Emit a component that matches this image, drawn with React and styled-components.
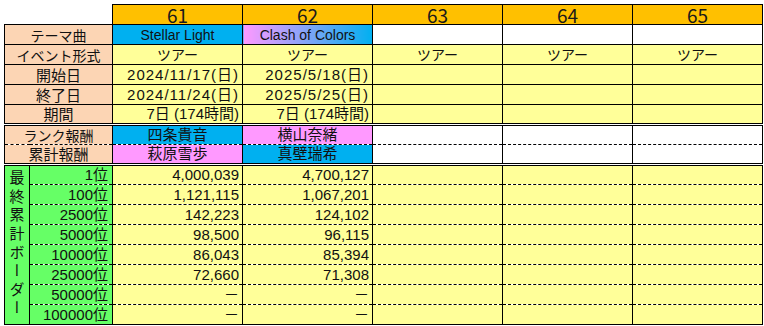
import React from 'react';
import styled, { createGlobalStyle } from 'styled-components';

const Global = createGlobalStyle`
  html, body { margin: 0; padding: 0; background: #fff; }
  body { font-family: "Noto Sans CJK JP", "Liberation Sans", sans-serif; }
`;

const Page = styled.div`
  padding: 4px 0 0 4px;
`;

const Sheet = styled.table`
  border-collapse: collapse;
  table-layout: fixed;
  width: 759px;
  font-family: "Liberation Sans", "Noto Sans CJK JP", sans-serif;
  font-size: 14px;
  color: #111;
`;

const Row = styled.tr`
  height: 20px;
`;

const BLACK = '#000';
const borderFor = (kind) => {
  if (kind === 'double') return `3px double ${BLACK}`;
  if (kind === 'dashed') return `1px dashed ${BLACK}`;
  if (kind === 'none') return 'none';
  return `1px solid ${BLACK}`;
};

const Cell = styled.td`
  padding: 0 ${(p) => (p.$align === 'right' ? '3px' : '2px')};
  border-left: 1px solid ${BLACK};
  border-right: 1px solid ${BLACK};
  border-top: ${(p) => borderFor(p.$top)};
  border-bottom: ${(p) => borderFor(p.$bottom)};
  background: ${(p) => p.$bg || '#FFFF99'};
  text-align: ${(p) => p.$align || 'center'};
  font-size: ${(p) => p.$size || 14}px;
  vertical-align: middle;
  white-space: nowrap;
  overflow: hidden;
  line-height: 16px;
`;

const Blank = styled.th`
  border: none;
  background: #fff;
`;

const Head = styled.th`
  border: 1px solid ${BLACK};
  background: #FFC000;
  font-family: "Noto Sans CJK JP", sans-serif;
  font-weight: 400;
  font-size: 19px;
  line-height: 18px;
  padding: 0;
  color: #1a1a1a;
`;

const Label = styled(Cell)`
  background: #FCD5B4;
  text-align: center;
  font-family: "Noto Sans CJK JP", sans-serif;
`;

const Rank = styled(Cell)`
  background: #66FF66;
  text-align: right;
  padding-right: 4px;
  font-size: 15px;
`;

const Side = styled.td`
  border: 1px solid ${BLACK};
  border-top: 3px double ${BLACK};
  background: #66FF66;
  vertical-align: top;
  text-align: center;
  padding: 4px 0 0;
`;

const VText = styled.span`
  display: inline-block;
  writing-mode: vertical-rl;
  text-orientation: upright;
  font-family: "Noto Sans CJK JP", sans-serif;
  font-size: 15px;
  letter-spacing: 3.6px;
  line-height: 1;
  color: #111;
`;

const Num = styled.span`
  font-size: 15px;
  letter-spacing: ${(p) => (p.$wide ? '1px' : '0')};
`;

const BLUE = '#00B0F0';
const PINK = '#FF99FF';
const WHITE = '#FFFFFF';

const ranks = ['1位', '100位', '2500位', '5000位', '10000位', '25000位', '50000位', '100000位'];
const b61 = ['4,000,039', '1,121,115', '142,223', '98,500', '86,043', '72,660', '－', '－'];
const b62 = ['4,700,127', '1,067,201', '124,102', '96,115', '85,394', '71,308', '－', '－'];

export default function App() {
  return (
    <Page>
      <Global />
      <Sheet>
        <colgroup>
          <col style={{ width: 25 }} />
          <col style={{ width: 83 }} />
          <col style={{ width: 130 }} />
          <col style={{ width: 130 }} />
          <col style={{ width: 130 }} />
          <col style={{ width: 130 }} />
          <col style={{ width: 130 }} />
        </colgroup>
        <tbody>
          <Row>
            <Blank colSpan={2} />
            {['61', '62', '63', '64', '65'].map((n) => (
              <Head key={n}>{n}</Head>
            ))}
          </Row>
          <Row>
            <Label colSpan={2}>テーマ曲</Label>
            <Cell $bg={BLUE}>Stellar Light</Cell>
            <Cell $bg={`linear-gradient(90deg, ${PINK} 0%, ${BLUE} 100%)`}>Clash of Colors</Cell>
            <Cell $bg={WHITE} />
            <Cell $bg={WHITE} />
            <Cell $bg={WHITE} />
          </Row>
          <Row>
            <Label colSpan={2}>イベント形式</Label>
            {[0, 1, 2, 3, 4].map((i) => (
              <Cell key={i}>ツアー</Cell>
            ))}
          </Row>
          <Row>
            <Label colSpan={2} $size={15}>開始日</Label>
            <Cell $align="right"><Num $wide>2024/11/17(日)</Num></Cell>
            <Cell $align="right"><Num $wide>2025/5/18(日)</Num></Cell>
            <Cell />
            <Cell />
            <Cell />
          </Row>
          <Row>
            <Label colSpan={2} $size={15}>終了日</Label>
            <Cell $align="right"><Num $wide>2024/11/24(日)</Num></Cell>
            <Cell $align="right"><Num $wide>2025/5/25(日)</Num></Cell>
            <Cell />
            <Cell />
            <Cell />
          </Row>
          <Row>
            <Label colSpan={2} $size={15}>期間</Label>
            <Cell $align="right"><Num>7日 (174時間)</Num></Cell>
            <Cell $align="right"><Num>7日 (174時間)</Num></Cell>
            <Cell />
            <Cell />
            <Cell />
          </Row>
          <Row>
            <Label colSpan={2} $top="double" $bottom="dashed">ランク報酬</Label>
            <Cell $top="double" $bottom="dashed" $bg={BLUE} $size={15}>四条貴音</Cell>
            <Cell $top="double" $bottom="dashed" $bg={PINK} $size={15}>横山奈緒</Cell>
            <Cell $top="double" $bottom="dashed" $bg={WHITE} />
            <Cell $top="double" $bottom="dashed" $bg={WHITE} />
            <Cell $top="double" $bottom="dashed" $bg={WHITE} />
          </Row>
          <Row>
            <Label colSpan={2} $top="dashed" $bottom="double" $size={15}>累計報酬</Label>
            <Cell $top="dashed" $bottom="double" $bg={PINK} $size={15}>萩原雪歩</Cell>
            <Cell $top="dashed" $bottom="double" $bg={BLUE} $size={15}>真壁瑞希</Cell>
            <Cell $top="dashed" $bottom="double" $bg={WHITE} />
            <Cell $top="dashed" $bottom="double" $bg={WHITE} />
            <Cell $top="dashed" $bottom="double" $bg={WHITE} />
          </Row>
          {ranks.map((r, i) => {
            const top = i === 0 ? 'double' : 'dashed';
            const bottom = i === ranks.length - 1 ? 'solid' : 'dashed';
            return (
              <Row key={r}>
                {i === 0 && (
                  <Side rowSpan={ranks.length}>
                    <VText>最終累計ボーダー</VText>
                  </Side>
                )}
                <Rank $top={top} $bottom={bottom}>{r}</Rank>
                <Cell $top={top} $bottom={bottom} $align="right"><Num>{b61[i]}</Num></Cell>
                <Cell $top={top} $bottom={bottom} $align="right"><Num>{b62[i]}</Num></Cell>
                <Cell $top={top} $bottom={bottom} />
                <Cell $top={top} $bottom={bottom} />
                <Cell $top={top} $bottom={bottom} />
              </Row>
            );
          })}
        </tbody>
      </Sheet>
    </Page>
  );
}
